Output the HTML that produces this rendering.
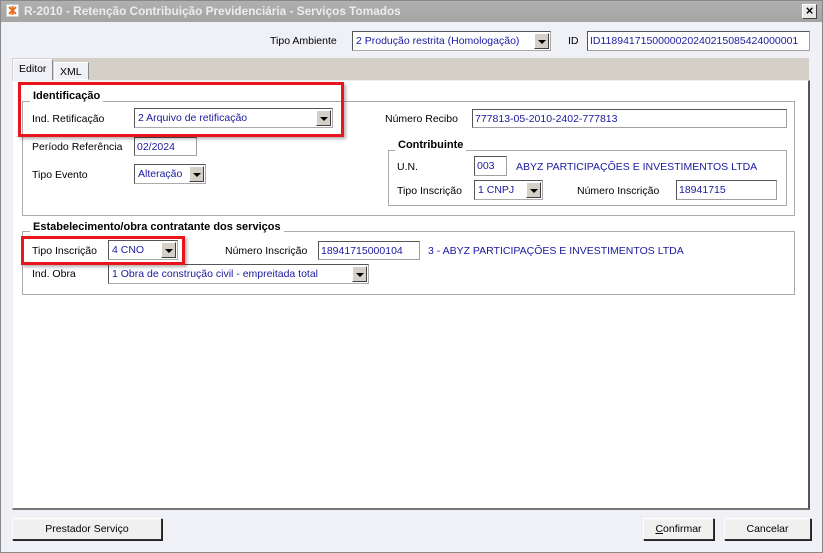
<!DOCTYPE html>
<html><head><meta charset="utf-8"><style>
*{box-sizing:border-box;margin:0;padding:0}
body{width:823px;height:553px;overflow:hidden;background:#f0f1f6;font-family:"Liberation Sans","DejaVu Sans",sans-serif;font-size:10.5px;color:#000;position:relative}
.a{position:absolute;white-space:nowrap}
.t{position:absolute;white-space:nowrap;line-height:14px}
.in{position:absolute;background:#fff;border:1px solid #a0a0a0;border-top-color:#555;border-left-color:#555;color:#1a1aa0;padding-left:2px;line-height:18px;white-space:nowrap;overflow:hidden}
.cb{position:absolute;background:#fff;border:1px solid #555;border-right-color:#aaa;border-bottom-color:#aaa;color:#1a1aa0;padding-left:3px;line-height:19px;white-space:nowrap;overflow:hidden}
.cb .btn{position:absolute;right:1px;top:1px;bottom:1px;width:15px;background:#d4d0c8;border:1px solid #fff;border-right-color:#404040;border-bottom-color:#404040}
.cb .btn:after{content:"";position:absolute;left:3px;top:6px;border-left:4px solid transparent;border-right:4px solid transparent;border-top:4px solid #000}
.grp{position:absolute;border:1px solid #aaa;box-shadow:inset 1px 1px 0 #fff}
.gl{position:absolute;background:#fff;font-weight:bold;padding:0 3px;line-height:14px;font-size:11px}
.red{position:absolute;border:3px solid #e8161c;box-shadow:2px 2px 3px rgba(0,0,0,.3)}
.b{position:absolute;background:#f0f0f0;border:1px solid #fff;border-right-color:#333;border-bottom-color:#333;box-shadow:1px 1px 0 #222;text-align:center;line-height:20px;font-size:10.5px}
</style></head><body>
<div class="a" style="left:0;top:0;width:823px;height:553px;border:1px solid #888"></div>
<div class="a" style="left:1px;top:1px;width:821px;height:21px;background:linear-gradient(#b0b0b0,#a4a4a4)"></div>
<div class="a" style="left:6px;top:4px;width:13px;height:13px;background:#fff;border:1px solid #ccc"><svg width="11" height="11" viewBox="0 0 11 11"><path d="M2 2l3 3M9 2l-3 3M2 9l3-3M9 9l-3-3M5.5 1v9" stroke="#e5702a" stroke-width="2"/></svg></div>
<div class="a" style="left:24px;top:4px;color:#ececec;font-weight:bold;font-size:11.8px">R-2010 - Retenção Contribuição Previdenciária - Serviços Tomados</div>
<div class="a" style="left:802px;top:4px;width:15px;height:15px;background:#e8e8e8;border:1px solid #fff;border-right-color:#444;border-bottom-color:#444;text-align:center;line-height:12px;font-size:13px;font-weight:bold">×</div>

<div class="t" style="left:270px;top:34px">Tipo Ambiente</div>
<div class="cb" style="left:352px;top:31px;width:199px;height:20px">2 Produção restrita (Homologação)<div class="btn"></div></div>
<div class="t" style="left:568px;top:34px">ID</div>
<div class="in" style="left:587px;top:31px;width:223px;height:20px;line-height:18px">ID1189417150000020240215085424000001</div>

<div class="a" style="left:12px;top:58px;width:797px;height:22px;background:#d4d0c8"></div>
<div class="a" style="left:13px;top:59px;width:40px;height:22px;background:#f0f1f6;border:1px solid #fff;border-right-color:#888;border-bottom:none;padding:3px 0 0 5px">Editor</div>
<div class="a" style="left:54px;top:62px;width:35px;height:18px;background:#f0f1f6;border:1px solid #fff;border-right-color:#888;padding:3px 0 0 5px">XML</div>
<div class="a" style="left:12px;top:80px;width:798px;height:430px;background:#fff;border:1px solid #eee;border-right:2px solid #555;border-bottom:2px solid #777"></div>

<div class="grp" style="left:22px;top:101px;width:773px;height:115px"></div>
<div class="gl" style="left:30px;top:89px">Identificação</div>
<div class="t" style="left:32px;top:112px">Ind. Retificação</div>
<div class="cb" style="left:134px;top:108px;width:199px;height:20px">2 Arquivo de retificação<div class="btn"></div></div>
<div class="t" style="left:32px;top:140px">Período Referência</div>
<div class="in" style="left:134px;top:137px;width:63px;height:19px">02/2024</div>
<div class="t" style="left:32px;top:168px">Tipo Evento</div>
<div class="cb" style="left:134px;top:164px;width:72px;height:20px">Alteração<div class="btn"></div></div>
<div class="t" style="left:385px;top:112px">Número Recibo</div>
<div class="in" style="left:472px;top:109px;width:315px;height:19px">777813-05-2010-2402-777813</div>

<div class="grp" style="left:388px;top:150px;width:399px;height:56px"></div>
<div class="gl" style="left:395px;top:138px">Contribuinte</div>
<div class="t" style="left:397px;top:160px">U.N.</div>
<div class="in" style="left:474px;top:156px;width:33px;height:20px">003</div>
<div class="t" style="left:516px;top:160px;color:#1a1aa0">ABYZ PARTICIPAÇÕES E INVESTIMENTOS LTDA</div>
<div class="t" style="left:397px;top:184px">Tipo Inscrição</div>
<div class="cb" style="left:474px;top:180px;width:69px;height:20px">1 CNPJ<div class="btn"></div></div>
<div class="t" style="left:577px;top:184px">Número Inscrição</div>
<div class="in" style="left:676px;top:180px;width:101px;height:20px">18941715</div>

<div class="red" style="left:18px;top:82px;width:326px;height:55px"></div>

<div class="grp" style="left:22px;top:231px;width:773px;height:64px"></div>
<div class="gl" style="left:30px;top:220px">Estabelecimento/obra contratante dos serviços</div>
<div class="t" style="left:32px;top:244px">Tipo Inscrição</div>
<div class="cb" style="left:108px;top:240px;width:70px;height:20px">4 CNO<div class="btn"></div></div>
<div class="t" style="left:225px;top:244px">Número Inscrição</div>
<div class="in" style="left:318px;top:241px;width:102px;height:19px">18941715000104</div>
<div class="t" style="left:428px;top:244px;color:#1a1aa0">3 - ABYZ PARTICIPAÇÕES E INVESTIMENTOS LTDA</div>
<div class="t" style="left:32px;top:267px">Ind. Obra</div>
<div class="cb" style="left:108px;top:264px;width:261px;height:20px">1 Obra de construção civil - empreitada total<div class="btn"></div></div>
<div class="red" style="left:21px;top:236px;width:164px;height:29px"></div>

<div class="b" style="left:12px;top:518px;width:150px;height:22px">Prestador Serviço</div>
<div class="b" style="left:643px;top:518px;width:71px;height:22px"><u>C</u>onfirmar</div>
<div class="b" style="left:724px;top:518px;width:87px;height:22px">Cancelar</div>
</body></html>
